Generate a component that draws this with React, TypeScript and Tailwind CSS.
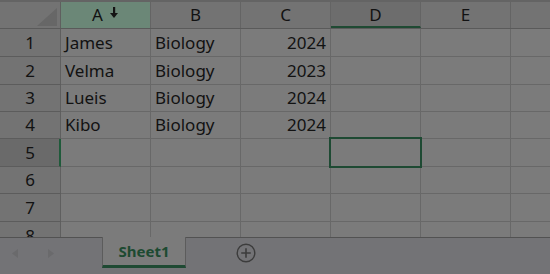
import React from "react"

const cols = ["A", "B", "C", "D", "E", ""]
const rowHeights = [28, 28, 27, 27, 28, 27, 28, 28]

const data: Record<number, [string, string, string]> = {
  1: ["James", "Biology", "2024"],
  2: ["Velma", "Biology", "2023"],
  3: ["Lueis", "Biology", "2024"],
  4: ["Kibo", "Biology", "2024"],
}

function SortArrow() {
  return (
    <svg width="10" height="12" viewBox="0 0 10 12" className="ml-[6px] mt-[-4px]">
      <rect x="4" y="0" width="2.2" height="7" fill="#141414" />
      <path d="M1 6 L9 6 L5 11 Z" fill="#141414" />
    </svg>
  )
}

function ColHeader({ label, i }: { label: string; i: number }) {
  const isA = label === "A"
  const isD = label === "D"
  return (
    <div
      className={
        "flex h-[26px] shrink-0 items-center justify-center border-r border-[#646464] " +
        (i === 5 ? "w-[40px] " : "w-[90px] ") +
        (isA ? "bg-[#6b8777]" : isD ? "bg-[#6d6d6d] border-b-2 border-b-[#1f4a33]" : "bg-[#737373]")
      }
    >
      <span className={isD ? "mt-[2px]" : ""}>{label}</span>
      {isA && <SortArrow />}
    </div>
  )
}

function Row({ n, h }: { n: number; h: number }) {
  const d = data[n]
  const sel = n === 5
  return (
    <div className="flex shrink-0" style={{ height: h }}>
      <div
        className={
          "flex w-[61px] shrink-0 items-center justify-center border-b border-[#5c5c5c] " +
          (sel ? "bg-[#6a6a6a] border-r-2 border-r-[#1f5a3a]" : "bg-[#737373] border-r border-r-[#5f5f5f]")
        }
      >
        <span className={sel ? "ml-[1px]" : ""}>{n}</span>
      </div>
      {cols.map((c, i) => (
        <div
          key={c + i}
          className={
            "relative flex shrink-0 items-center border-b border-r border-[#686868] bg-[#7b7b7b] px-[4px] " +
            (i === 5 ? "w-[40px] " : "w-[90px] ") +
            (i === 2 ? "justify-end" : "justify-start")
          }
        >
          {d && i < 3 ? d[i] : ""}
          {sel && c === "D" && (
            <div className="absolute -left-[2px] -top-[2px] z-10 h-[31px] w-[93px] border-2 border-[#1e4a33]" />
          )}
        </div>
      ))}
    </div>
  )
}

export default function App() {
  return (
    <div
      className="flex h-[274px] w-[550px] flex-col overflow-hidden bg-[#737376] text-[17px] text-[#121212]"
      style={{ fontFamily: "'Noto Sans', 'Liberation Sans', sans-serif" }}
    >
      <div className="h-[237px] shrink-0 overflow-hidden bg-[#7b7b7b]">
        <div className="h-[2px] bg-[#646464]" />
        <div className="flex border-b border-[#5a5a5a]">
          <div className="relative h-[26px] w-[61px] shrink-0 border-r border-[#5f5f5f] bg-[#737373]">
            <svg width="20" height="18" viewBox="0 0 20 18" className="absolute bottom-[2px] right-[3px]">
              <path d="M20 0 L20 18 L0 18 Z" fill="#676767" />
            </svg>
          </div>
          {cols.map((c, i) => (
            <ColHeader key={c + i} label={c} i={i} />
          ))}
        </div>
        {rowHeights.map((h, i) => (
          <Row key={i} n={i + 1} h={h} />
        ))}
      </div>

      <div className="flex h-[37px] shrink-0 items-start">
        <div className="flex h-[31px] w-[102px] items-center gap-[30px] border-t border-[#525252] pl-[12px]">
          <svg width="6" height="9" viewBox="0 0 6 9">
            <path d="M6 0 L0 4.5 L6 9 Z" fill="#6a6a6c" />
          </svg>
          <svg width="6" height="9" viewBox="0 0 6 9">
            <path d="M0 0 L6 4.5 L0 9 Z" fill="#6a6a6c" />
          </svg>
        </div>
        <div className="flex h-[31px] w-[84px] items-center justify-center border-x border-[#5c5c5c] border-b-[3px] border-b-[#1f4a33] bg-[#7b7b7b] text-[15px] font-bold text-[#1d4a31]">
          Sheet1
        </div>
        <div className="flex h-[31px] flex-1 items-center border-t border-[#525252] pl-[50px]">
          <svg width="20" height="20" viewBox="0 0 20 20">
            <circle cx="10" cy="10" r="8.8" fill="none" stroke="#3c3c3c" strokeWidth="1.4" />
            <path d="M10 5.2 V14.8 M5.2 10 H14.8" stroke="#3c3c3c" strokeWidth="1.6" />
          </svg>
        </div>
      </div>
    </div>
  )
}
